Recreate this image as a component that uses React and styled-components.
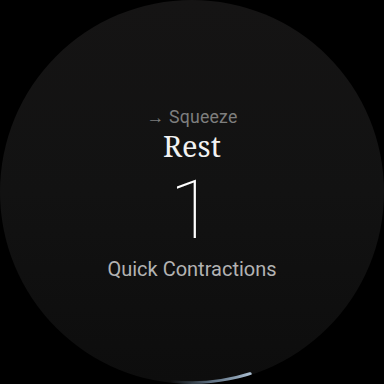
import React from "react";
import styled, { createGlobalStyle } from "styled-components";

const Global = createGlobalStyle`
  html, body { margin: 0; padding: 0; background: #000; }
  body { width: 384px; height: 384px; overflow: hidden; }
`;

const Screen = styled.div`
  position: relative;
  width: 384px;
  height: 384px;
  border-radius: 50%;
  overflow: hidden;
  background: linear-gradient(180deg, #151414 0%, #121212 50%, #0d0d0d 100%);
  display: flex;
  flex-direction: column;
  align-items: center;
  padding-top: 106px;
  box-sizing: border-box;
  font-family: Roboto, "Noto Sans", sans-serif;
`;

const Prev = styled.div`
  font-size: 17.7px;
  line-height: 22px;
  color: #7e7e7e;
  letter-spacing: 0.2px;
`;

const Phase = styled.div`
  font-family: "Noto Serif", "DejaVu Serif", "Liberation Serif", serif;
  font-size: 29px;
  line-height: 36px;
  color: #f2f2f2;
`;

const Count = styled.div`
  font-size: 82px;
  font-weight: 100;
  line-height: 82px;
  color: #ffffff;
  margin-top: 5px;
`;

const Label = styled.div`
  font-size: 20px;
  line-height: 26px;
  color: #b3b3b3;
  margin-top: 5px;
`;

const Progress = styled.svg`
  position: absolute;
  left: 0;
  top: 0;
  width: 384px;
  height: 384px;
  pointer-events: none;
`;

export default function App() {
  const cx = 192, cy = 192, r = 191;
  const pt = (x) => [x, cy + Math.sqrt(r * r - (x - cx) * (x - cx))];
  const [x1, y1] = pt(170);
  const [x2, y2] = pt(250);
  return (
    <>
      <Global />
      <Screen>
        <Prev>→ Squeeze</Prev>
        <Phase>Rest</Phase>
        <Count>1</Count>
        <Label>Quick Contractions</Label>
        <Progress viewBox="0 0 384 384">
          <defs>
            <linearGradient id="g" x1="170" y1="0" x2="250" y2="0" gradientUnits="userSpaceOnUse">
              <stop offset="0" stopColor="#5e7890" stopOpacity="0" />
              <stop offset="0.5" stopColor="#7d96ae" stopOpacity="0.7" />
              <stop offset="1" stopColor="#a9bdd0" stopOpacity="1" />
            </linearGradient>
          </defs>
          <path
            d={`M ${x1} ${y1} A ${r} ${r} 0 0 0 ${x2} ${y2}`}
            fill="none"
            stroke="url(#g)"
            strokeWidth="3.5"
            strokeLinecap="round"
          />
        </Progress>
      </Screen>
    </>
  );
}
